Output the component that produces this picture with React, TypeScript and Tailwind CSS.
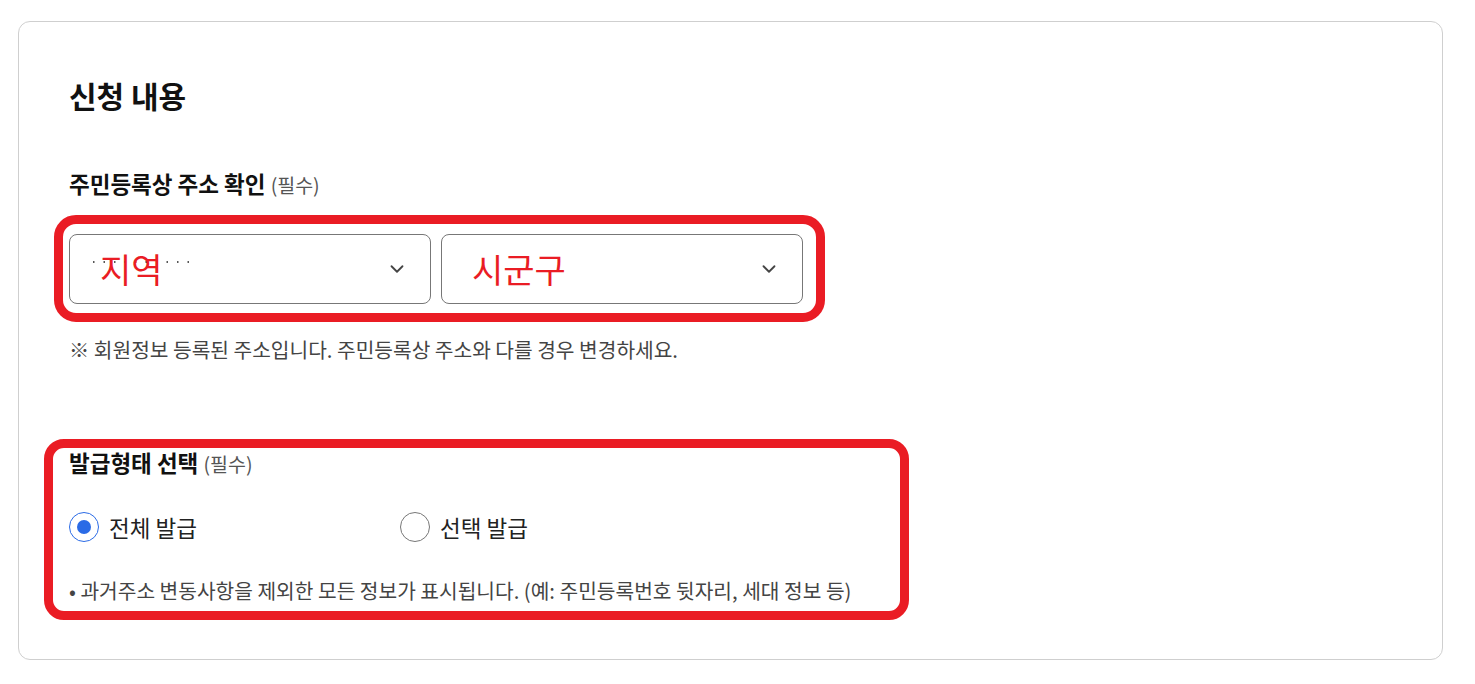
import { ChevronDown } from 'lucide-react';

const font = { fontFamily: '"Noto Sans CJK KR", "Noto Sans", sans-serif' };

function Select({ label, dots }: { label: string; dots?: boolean }) {
  return (
    <div className="relative flex h-[70px] w-[362px] items-center justify-between rounded-lg border border-[#777] bg-white pl-[30px] pr-[22px]">
      {dots && (
        <svg className="absolute left-[23px] top-[25px]" width="100" height="4">
          <line x1="0" y1="2" x2="100" y2="2" stroke="#222" strokeWidth="1.5" strokeDasharray="1.5 9" />
        </svg>
      )}
      <span className="relative text-[34px] leading-none text-[#ea1c24]">{label}</span>
      <ChevronDown className="h-[22px] w-[22px] text-[#444]" strokeWidth={2} />
    </div>
  );
}

function Radio({ checked, label }: { checked?: boolean; label: string }) {
  return (
    <label className="flex w-[331px] items-center gap-[10px]">
      <span
        className={
          checked
            ? 'flex h-[30px] w-[30px] items-center justify-center rounded-full border border-[#2b6be6] bg-white'
            : 'flex h-[30px] w-[30px] items-center justify-center rounded-full border border-[#777] bg-white'
        }
      >
        {checked && <span className="h-[14px] w-[14px] rounded-full bg-[#2b6be6]" />}
      </span>
      <span className="text-[22.5px] leading-[30px] text-[#222]">{label}</span>
    </label>
  );
}

export default function App() {
  return (
    <div className="min-h-screen bg-white pl-[18px] pt-[21px]" style={font}>
      <div className="h-[639px] w-[1425px] rounded-[12px] border border-[#cfcfcf] bg-white pl-[50px] pt-[53px]">
        <h1 className="text-[30px] font-bold leading-[40px] text-[#111]">신청 내용</h1>

        <div className="mt-[53px]">
          <h2 className="text-[22.5px] font-bold leading-[30px] text-[#111]">
            주민등록상 주소 확인 <span className="text-[19.5px] font-normal text-[#555]">(필수)</span>
          </h2>
          <div className="relative mt-[34px] flex gap-[10px]">
            <Select label="지역" dots />
            <Select label="시군구" />
            <div className="pointer-events-none absolute -left-[15px] -top-[19px] h-[107px] w-[771px] rounded-[22px] border-[9px] border-[#ea1c24]" />
          </div>
          <p className="mt-[31px] text-[20.3px] leading-[28px] text-[#444]">
            ※ 회원정보 등록된 주소입니다. 주민등록상 주소와 다를 경우 변경하세요.
          </p>
        </div>

        <div className="relative mt-[84px] w-[820px]">
          <h2 className="text-[22.5px] font-bold leading-[30px] text-[#111]">
            발급형태 선택 <span className="text-[19.5px] font-normal text-[#555]">(필수)</span>
          </h2>
          <div className="mt-[33px] flex">
            <Radio checked label="전체 발급" />
            <Radio label="선택 발급" />
          </div>
          <p className="mt-[35px] whitespace-nowrap text-[20.3px] leading-[26px] text-[#444]">
            • 과거주소 변동사항을 제외한 모든 정보가 표시됩니다. (예: 주민등록번호 뒷자리, 세대 정보 등)
          </p>
          <div className="pointer-events-none absolute -left-[25px] -top-[8px] h-[181px] w-[865px] rounded-[20px] border-[9px] border-[#ea1c24]" />
        </div>
      </div>
    </div>
  );
}
